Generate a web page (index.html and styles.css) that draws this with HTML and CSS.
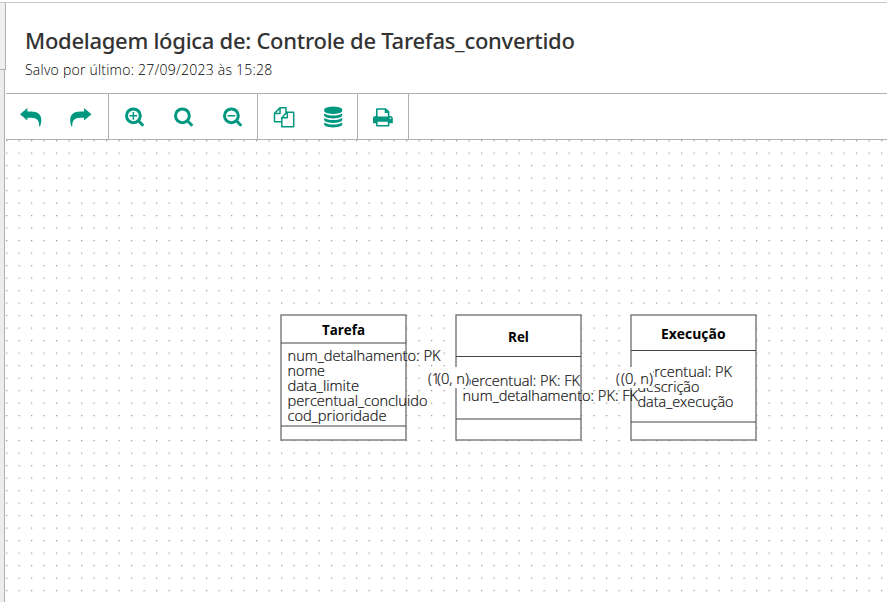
FILE: index.html
```html
<!DOCTYPE html>
<html lang="pt-BR">
<head>
<meta charset="utf-8">
<title>Modelagem lógica</title>
<link rel="stylesheet" href="styles.css">
</head>
<body>
<div class="app">
  <aside class="side"><div class="side-tab"></div><div class="side-rest"></div></aside>
  <main class="main">
    <header class="header">
      <h1 class="title">Modelagem lógica de: Controle de Tarefas_convertido</h1>
      <p class="saved">Salvo por último: 27/09/2023 às 15:28</p>
    </header>
    <nav class="toolbar">
      <div class="group history">
        <button class="tool" aria-label="Desfazer"><svg class="icon" viewBox="0 0 22 22"><path d="M0 8.3L7.4 2V5.4H11C18 5.4 21.3 8.2 21.3 14.2C21.3 16.5 20.8 18.6 20 20.5H19.2C19.4 14.5 17 11.8 11 11.8H7.4V14.6Z"/></svg></button>
        <button class="tool" aria-label="Refazer"><svg class="icon" viewBox="0 0 22 22"><path transform="matrix(-1 0 0 1 21.5 0)" d="M0 8.3L7.4 2V5.4H11C18 5.4 21.3 8.2 21.3 14.2C21.3 16.5 20.8 18.6 20 20.5H19.2C19.4 14.5 17 11.8 11 11.8H7.4V14.6Z"/></svg></button>
      </div>
      <div class="group zoom">
        <button class="tool" aria-label="Aumentar"><svg class="icon line" viewBox="0 0 22 22"><circle cx="9.4" cy="9.8" r="6.9"/><path d="M14.4 14.8L19.3 19.7"/><path class="thin" d="M5.5 9.8H13.3M9.4 5.9V13.7"/></svg></button>
        <button class="tool" aria-label="Ajustar"><svg class="icon line" viewBox="0 0 22 22"><circle cx="9.4" cy="9.8" r="6.9"/><path d="M14.4 14.8L19.3 19.7"/></svg></button>
        <button class="tool" aria-label="Diminuir"><svg class="icon line" viewBox="0 0 22 22"><circle cx="9.4" cy="9.8" r="6.9"/><path d="M14.4 14.8L19.3 19.7"/><path class="thin" d="M5.5 9.8H13.3"/></svg></button>
      </div>
      <div class="group files">
        <button class="tool" aria-label="Copiar"><svg class="icon pages" viewBox="0 0 22 22"><path d="M8.3 15.7H1.5V7.4L7 1.8H13V7.6M7 1.8V7.4H1.5M8.8 11.8L13.8 6.3H20.7V20.7H8.8ZM8.8 11.8H14.3V6.3"/></svg></button>
        <button class="tool" aria-label="Banco de dados"><svg class="icon" viewBox="0 0 22 22"><path transform="translate(.7 .5) scale(.01172)" d="M896 768q237 0 443-43t325-127v170q0 69-103 128t-280 93.5-385 34.5-385-34.5-280-93.5-103-128v-170q119 84 325 127t443 43zm0 768q237 0 443-43t325-127v170q0 69-103 128t-280 93.5-385 34.5-385-34.5-280-93.5-103-128v-170q119 84 325 127t443 43zm0-384q237 0 443-43t325-127v170q0 69-103 128t-280 93.5-385 34.5-385-34.5-280-93.5-103-128v-170q119 84 325 127t443 43zm0-1152q208 0 385 34.5t280 93.5 103 128v128q0 69-103 128t-280 93.5-385 34.5-385-34.5-280-93.5-103-128v-128q0-69 103-128t280-93.5 385-34.5z"/></svg></button>
      </div>
      <div class="group print">
        <button class="tool" aria-label="Imprimir"><svg class="icon" viewBox="0 0 22 22"><path fill-rule="evenodd" d="M4 11V3.2Q4 2.2 5 2.2H14L17.4 5.6V10H18.2Q20.8 10 20.8 12.5V17.2H17.4V19.5Q17.4 20.5 16.4 20.5H5Q4 20.5 4 19.5V17.2H1V12.5Q1 10 3.6 10H4ZM5.6 3.8V10.5H15.8V7H12.7V3.8ZM5.6 15.7V19H15.8V15.7ZM18.4 11.4A.8.8 0 1 0 18.4 13A.8.8 0 1 0 18.4 11.4Z"/></svg></button>
      </div>
    </nav>
    <svg class="canvas" viewBox="6 140 881 462">
      <defs>
        <pattern id="dots" x="6" y="140" width="12.5" height="12.5" patternUnits="userSpaceOnUse"><rect class="dot" width="1.25" height="1.25"/></pattern>
      </defs>
      <rect x="6" y="140" width="881" height="462" fill="url(#dots)"/>
      <g class="box">
        <rect x="281" y="315" width="125" height="125"/>
        <path d="M281 343H406M281 426H406"/>
        <text class="name" x="322" y="335" textLength="43" lengthAdjust="spacingAndGlyphs">Tarefa</text>
        <text x="287.5" y="361" textLength="153" lengthAdjust="spacingAndGlyphs">num_detalhamento: PK</text>
        <text x="287.5" y="376" textLength="37.5" lengthAdjust="spacingAndGlyphs">nome</text>
        <text x="287.5" y="391" textLength="71.5" lengthAdjust="spacingAndGlyphs">data_limite</text>
        <text x="287.5" y="406" textLength="140" lengthAdjust="spacingAndGlyphs">percentual_concluido</text>
        <text x="287.5" y="421" textLength="99" lengthAdjust="spacingAndGlyphs">cod_prioridade</text>
      </g>
      <g class="box">
        <rect x="631" y="315" width="125" height="125"/>
        <path d="M631 350.5H756M631 422H756"/>
        <text class="name" x="661" y="339" textLength="64.5" lengthAdjust="spacingAndGlyphs">Execução</text>
        <text x="637.5" y="377" textLength="94.5" lengthAdjust="spacingAndGlyphs">percentual: PK</text>
        <text x="637.5" y="392" textLength="62" lengthAdjust="spacingAndGlyphs">descrição</text>
        <text x="637.5" y="407" textLength="96" lengthAdjust="spacingAndGlyphs">data_execução</text>
      </g>
      <g class="box">
        <rect x="456" y="315" width="125" height="125"/>
        <path d="M456 356.5H581M456 419H581"/>
        <text class="name" x="508" y="342" textLength="21" lengthAdjust="spacingAndGlyphs">Rel</text>
        <text x="462.5" y="386" textLength="117.5" lengthAdjust="spacingAndGlyphs">percentual: PK: FK</text>
        <text x="462.5" y="401" textLength="175.5" lengthAdjust="spacingAndGlyphs">num_detalhamento: PK: FK</text>
      </g>
      <g class="label">
        <rect x="428" y="367" width="9" height="21"/>
        <text x="428" y="384">(1</text>
        <rect x="437" y="367" width="32.5" height="21"/>
        <text x="437" y="384" textLength="32" lengthAdjust="spacingAndGlyphs">(0, n)</text>
      </g>
      <g class="label">
        <rect x="616" y="367" width="37.5" height="21"/>
        <text x="616" y="384">(</text>
        <text x="621" y="384" textLength="32" lengthAdjust="spacingAndGlyphs">(0, n)</text>
      </g>
    </svg>
  </main>
</div>
</body>
</html>
```
FILE: styles.css
```css
* { box-sizing: border-box; }
body { margin: 0; background: #fff; font-family: "Open Sans", "Noto Sans", sans-serif; overflow: hidden; }
.app { display: flex; width: 887px; height: 602px; padding-top: 2px; }
.side { display: flex; flex-direction: column; width: 6px; border-top: 1px solid #c8c8c8; }
.side-tab { height: 67px; background: #f0f0f0; border-right: 1px solid #b0b0b0; border-bottom: 1px solid #b0b0b0; }
.side-rest { flex: 1; width: 5px; background: #ececec; border-right: 1px solid #b0b0b0; }
.main { display: flex; flex-direction: column; width: 881px; border-top: 1px solid #c8c8c8; }
.header { height: 90px; padding: 21px 0 0 19px; white-space: nowrap; }
.title { margin: 0; font-family: "Noto Sans", sans-serif; font-size: 22px; font-weight: 500; line-height: 32px; letter-spacing: -.28px; color: #333; }
.saved { margin: 4px 0 0; font-size: 14px; font-weight: 300; line-height: 20px; letter-spacing: .23px; color: #000; }
.toolbar { display: flex; height: 47px; border-top: 1px solid #b0b0b0; border-bottom: 1px solid #b0b0b0; }
.group { display: flex; border-right: 1px solid #b0b0b0; }
.history { width: 103px; padding-right: 2px; }
.zoom { width: 149px; padding-left: 1px; }
.files { width: 100px; padding-left: 1px; }
.print { width: 51px; }
.tool { display: flex; flex: 1; align-items: center; justify-content: center; padding: 0; border: 0; background: none; }
.icon { width: 22px; height: 22px; fill: #009780; }
.line { fill: none; stroke: #009780; stroke-width: 3; }
.line .thin { stroke-width: 1.5; }
.pages { fill: none; stroke: #009780; stroke-width: 1.5; stroke-linejoin: round; }
.canvas { display: block; width: 881px; height: 462px; font-size: 14px; font-family: "Open Sans", sans-serif; }
.dot { fill: #999; }
.box rect { fill: #fff; stroke: #777; stroke-width: 1.4; }
.box path { fill: none; stroke: #444; stroke-width: 1.2; }
.box text, .label text { fill: #111; stroke: #111; stroke-width: .2; font-weight: 300; }
.box .name { fill: #000; stroke: none; font-weight: 700; }
.label rect { fill: #fff; }
```
